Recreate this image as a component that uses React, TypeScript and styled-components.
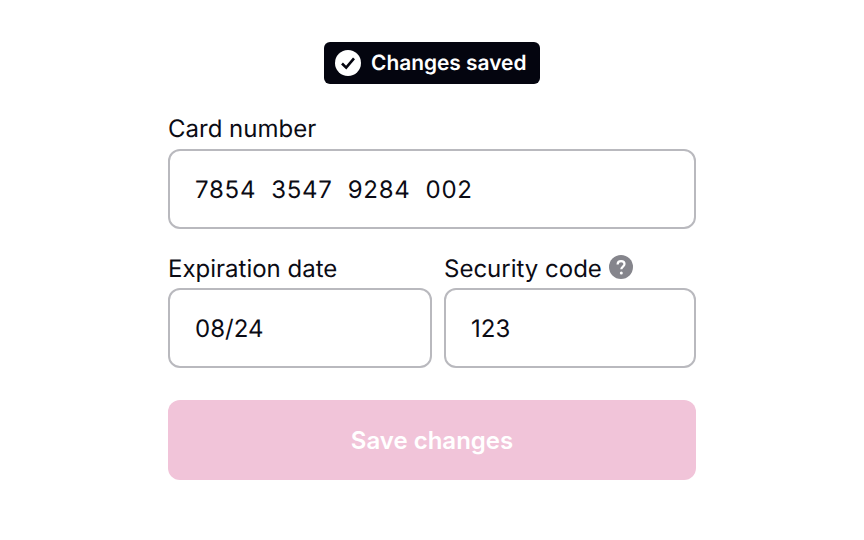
import React from 'react';
import styled, { createGlobalStyle } from 'styled-components';

const GlobalStyle = createGlobalStyle`
  html, body {
    margin: 0;
    padding: 0;
    background: #ffffff;
    font-family: Inter, "Liberation Sans", sans-serif;
    text-rendering: geometricPrecision;
  }
`;

const Page = styled.div`
  width: 864px;
  height: 540px;
  display: flex;
  flex-direction: column;
  align-items: center;
  padding-top: 42px;
  box-sizing: border-box;
`;

const Toast = styled.div`
  height: 42px;
  box-sizing: border-box;
  display: flex;
  align-items: center;
  gap: 9.5px;
  padding: 0 13px 0 11px;
  background: #04050f;
  border-radius: 6px;
  color: #ffffff;
  font-size: 20.9px;
  font-weight: 600;
`;

const ToastText = styled.span`
  padding-top: 1px;
`;

const Form = styled.form`
  width: 528px;
  margin-top: 24px;
  display: flex;
  flex-direction: column;
`;

const Row = styled.div`
  display: flex;
  gap: 12px;
  margin-top: 19.5px;
`;

const Field = styled.div<{ width: number }>`
  width: ${(props) => props.width}px;
  display: flex;
  flex-direction: column;
`;

const Label = styled.label<{ tall?: boolean }>`
  height: ${(props) => (props.tall ? '40.5px' : '40px')};
  display: flex;
  align-items: center;
  gap: 7.5px;
  color: #0b0b14;
  font-size: 24px;
`;

const Input = styled.div<{ spaced?: boolean }>`
  height: 80px;
  box-sizing: border-box;
  display: flex;
  align-items: center;
  padding: 1px 0 0 25px;
  border: 2px solid #b9b9be;
  border-radius: 12px;
  color: #0b0b14;
  font-size: 24px;
  letter-spacing: ${(props) => (props.spaced ? '0.75px' : '0')};
  white-space: pre;
`;

const SaveButton = styled.button`
  height: 80px;
  margin-top: 32px;
  border: none;
  border-radius: 12px;
  background: #f1c4d9;
  color: #ffffff;
  font-family: inherit;
  font-size: 24px;
  font-weight: 600;
`;

const HelpSvg = styled.svg`
  margin-bottom: 2px;
`;

const CheckIcon = () => (
  <svg width="26" height="26" viewBox="0 0 26 26">
    <circle cx="13" cy="13" r="13" fill="#ffffff" />
    <path d="M7 13.5l4.2 4.2L19 8.4" fill="none" stroke="#04050f" strokeWidth="2.6" />
  </svg>
);

const HelpIcon = () => (
  <HelpSvg width="24" height="24" viewBox="0 0 24 24">
    <circle cx="12" cy="12" r="12" fill="#85858c" />
    <path
      d="M8.6 9.4c0-2 1.5-3.2 3.5-3.2s3.4 1.2 3.4 2.9c0 2.5-3.2 2.6-3.2 5.2"
      fill="none"
      stroke="#ffffff"
      strokeWidth="2.2"
    />
    <circle cx="12.3" cy="18" r="1.5" fill="#ffffff" />
  </HelpSvg>
);

const App = (): JSX.Element => {
  return (
    <Page>
      <GlobalStyle />
      <Toast>
        <CheckIcon />
        <ToastText>Changes saved</ToastText>
      </Toast>
      <Form>
        <Field width={528}>
          <Label tall>Card number</Label>
          <Input spaced>7854  3547  9284  002</Input>
        </Field>
        <Row>
          <Field width={264}>
            <Label>Expiration date</Label>
            <Input>08/24</Input>
          </Field>
          <Field width={252}>
            <Label>
              Security code
              <HelpIcon />
            </Label>
            <Input>123</Input>
          </Field>
        </Row>
        <SaveButton type="button">Save changes</SaveButton>
      </Form>
    </Page>
  );
};

export default App;
